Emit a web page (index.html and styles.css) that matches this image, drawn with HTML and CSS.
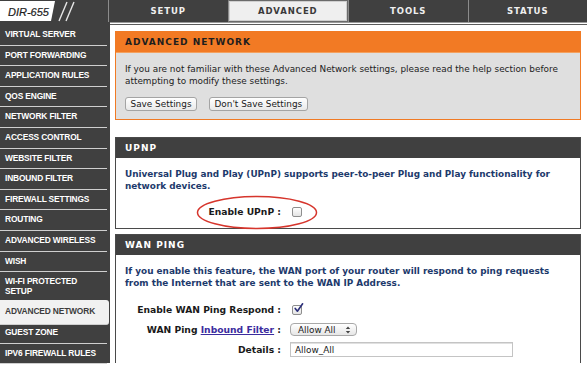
FILE: index.html
```html
<!DOCTYPE html>
<html>
<head>
<meta charset="utf-8">
<link rel="stylesheet" href="styles.css">
</head>
<body>
<div class="top">
  <div class="logo">
    <svg class="logo-bg" width="108" height="22" viewBox="0 0 108 22">
      <polygon points="0,1 55,1 51,21 0,21" fill="#ffffff"/>
      <line x1="67" y1="2" x2="59" y2="21" stroke="#e6e6e6" stroke-width="1.4"/>
      <line x1="74" y1="2" x2="66" y2="21" stroke="#e6e6e6" stroke-width="1.4"/>
    </svg>
    <span class="logo-text">DIR-655</span>
  </div>
  <div class="tabs">
    <div class="tab">SETUP</div>
    <div class="tab active">ADVANCED</div>
    <div class="tab">TOOLS</div>
    <div class="tab">STATUS</div>
  </div>
</div>
<div class="layout">
  <nav class="sidebar">
    <a class="item">VIRTUAL SERVER</a>
    <a class="item">PORT FORWARDING</a>
    <a class="item">APPLICATION RULES</a>
    <a class="item">QOS ENGINE</a>
    <a class="item">NETWORK FILTER</a>
    <a class="item">ACCESS CONTROL</a>
    <a class="item">WEBSITE FILTER</a>
    <a class="item">INBOUND FILTER</a>
    <a class="item">FIREWALL SETTINGS</a>
    <a class="item">ROUTING</a>
    <a class="item">ADVANCED WIRELESS</a>
    <a class="item">WISH</a>
    <a class="item">WI-FI PROTECTED<br>SETUP</a>
    <a class="item selected">ADVANCED NETWORK</a>
    <a class="item">GUEST ZONE</a>
    <a class="item">IPV6 FIREWALL RULES</a>
  </nav>
  <main class="main">
    <div class="rule"></div>
    <section class="box box-orange">
      <h2 class="box-head head-orange">ADVANCED NETWORK</h2>
      <div class="box-body body-grey">
        <p class="desc">If you are not familiar with these Advanced Network settings, please read the help section before attempting to modify these settings.</p>
        <div class="buttons">
          <span class="btn">Save Settings</span>
          <span class="btn">Don't Save Settings</span>
        </div>
      </div>
    </section>

    <section class="box box-dark upnp">
      <h2 class="box-head head-dark">UPNP</h2>
      <div class="box-body">
        <p class="info">Universal Plug and Play (UPnP) supports peer-to-peer Plug and Play functionality for network devices.</p>
        <div class="form">
          <div class="row marked">
            <span class="label">Enable UPnP :</span>
            <span class="field"><span class="check"></span></span>
            <svg class="mark" width="122" height="35" viewBox="0 0 122 35"><ellipse cx="61" cy="17.5" rx="59.5" ry="16" fill="none" stroke="#d6352c" stroke-width="1.5"/></svg>
          </div>
        </div>
      </div>
    </section>

    <section class="box box-dark wan">
      <h2 class="box-head head-dark">WAN PING</h2>
      <div class="box-body">
        <p class="info">If you enable this feature, the WAN port of your router will respond to ping requests from the Internet that are sent to the WAN IP Address.</p>
        <div class="form">
          <div class="row">
            <span class="label">Enable WAN Ping Respond :</span>
            <span class="field"><span class="check on"><svg width="11" height="11" viewBox="0 0 11 11"><path d="M2.2 5.4 L4.4 8.2 L9.6 0.8" fill="none" stroke="#2c2f7a" stroke-width="1.6" stroke-linecap="round" stroke-linejoin="round"/></svg></span></span>
          </div>
          <div class="row">
            <span class="label">WAN Ping <a class="link">Inbound Filter</a> :</span>
            <span class="field"><span class="select">Allow All <svg width="6" height="8" viewBox="0 0 6 8"><path d="M3 0.5 L5.2 3 L0.8 3 Z M3 7.5 L5.2 5 L0.8 5 Z" fill="#444"/></svg></span></span>
          </div>
          <div class="row">
            <span class="label">Details :</span>
            <span class="field"><span class="input">Allow_All</span></span>
          </div>
        </div>
      </div>
    </section>
  </main>
</div>
</body>
</html>
```

FILE: styles.css
```css
* { box-sizing: border-box; }
html, body { margin: 0; padding: 0; }
body {
  width: 587px;
  height: 369px;
  overflow: hidden;
  background: #ffffff;
  font-family: "DejaVu Sans", sans-serif;
  font-size: 8.9px;
  color: #222;
}
h2, p { margin: 0; }

.top {
  display: flex;
  height: 22px;
  background: #404040;
}
.logo {
  width: 108px;
  display: grid;
  align-items: center;
}
.logo-bg, .logo-text { grid-area: 1 / 1; }
.logo-bg { display: block; }
.logo-text {
  font-family: "Liberation Sans", Arial, sans-serif;
  font-style: italic;
  font-size: 11px;
  color: #1c1c1c;
  padding-left: 8px;
  padding-top: 1px;
  -webkit-text-stroke: 0.2px #1c1c1c;
}
.tabs { flex: 1; display: flex; }
.tab {
  flex: 1;
  display: flex;
  align-items: center;
  justify-content: center;
  border-left: 1px solid #8c8c8c;
  font-family: "DejaVu Sans", sans-serif;
  font-weight: bold;
  font-size: 8.5px;
  letter-spacing: 0.9px;
  color: #efefef;
}
.tab.active {
  background: #efefef;
  color: #3a3a3a;
  border: 1px solid #6a6a6a;
  border-left: 1px solid #8c8c8c;
  box-shadow: inset 0 0 0 1px #cfcfcf;
}

.layout {
  display: flex;
  height: 341px;
}
.sidebar {
  width: 110px;
  background: #404040;
  padding-top: 3px;
  display: flex;
  flex-direction: column;
}
.item {
  display: block;
  margin-right: 3px;
  padding: 5px 0 5px 5px;
  line-height: 9.6px;
  border-bottom: 1px solid #cfcfcf;
  font-family: "Liberation Sans", Arial, sans-serif;
  font-weight: bold;
  font-size: 8.4px;
  letter-spacing: -0.15px;
  color: #ffffff;
}
.item.selected {
  background: #f1f1f1;
  color: #3c3c3c;
  margin-right: 1px;
  border-radius: 0 3px 3px 0;
  padding-top: 7px;
  padding-bottom: 7px;
  margin-top: -2px;
  margin-bottom: -2px;
  position: relative;
}

.main {
  flex: 1;
  padding: 0 6px 0 5px;
  overflow: hidden;
}
.rule {
  height: 3px;
  margin: 0 -6px 6px -5px;
  border-top: 1px solid #9a9a9a;
  border-bottom: 1px solid #5a5a5a;
}
.box { border: 1px solid; }
.box-orange { border-color: #f07a24; }
.box-dark { border-color: #4a4a4a; }
.box-head {
  height: 20px;
  display: flex;
  align-items: center;
  padding-left: 9px;
  font-family: "DejaVu Sans", sans-serif;
  font-weight: bold;
  font-size: 9px;
  letter-spacing: 1px;
}
.head-orange { background: #f27a24; color: #1e1e1e; border-bottom: 1px solid #f4a15f; height: 21px; }
.head-dark { background: #404040; color: #ffffff; }
.box-body { padding: 11px 9px 9px; }
.body-grey { background: #dfdfdf; padding: 11px 9px 8px; }
.desc { line-height: 11.7px; color: #222; }
.buttons {
  display: flex;
  gap: 12px;
  margin-top: 10px;
}
.btn {
  height: 14px;
  display: flex;
  align-items: center;
  padding: 0 4.5px;
  border: 1px solid #a4a4a4;
  border-radius: 3px;
  background: linear-gradient(#ffffff, #e9e9e9);
  color: #1a1a1a;
}

.upnp { margin-top: 17px; }
.wan { margin-top: 5px; border-bottom: none; }
.info {
  line-height: 11.7px;
  font-weight: bold;
  color: #1d3a6c;
}
.form {
  display: flex;
  flex-direction: column;
  gap: 5px;
}
.upnp .form { margin-top: 12px; }
.wan .form { margin-top: 13px; }
.row {
  display: grid;
  grid-template-columns: 156px 1fr;
  column-gap: 9px;
  align-items: center;
  min-height: 15px;
}
.upnp .row { min-height: 14px; }
.label {
  text-align: right;
  font-weight: bold;
  font-size: 9.2px;
  color: #1a1a1a;
}
.link { color: #3b2c9e; text-decoration: underline; }
.field { display: flex; align-items: center; }
.check {
  width: 10px;
  height: 10px;
  margin-left: 2px;
  border: 1px solid #8e8e8e;
  border-radius: 2px;
  background: linear-gradient(#ffffff, #e4e4e4);
  position: relative;
}
.check svg { position: absolute; left: 0; top: -3px; }
.select {
  width: 67px;
  height: 13px;
  display: flex;
  align-items: center;
  justify-content: space-between;
  padding: 0 5px 0 7px;
  border: 1px solid #a8a8a8;
  border-radius: 4px;
  background: linear-gradient(#ffffff, #e6e6e6);
  color: #1a1a1a;
}
.input {
  width: 223px;
  height: 15px;
  display: flex;
  align-items: center;
  padding-left: 4px;
  border: 1px solid #c4c4c4;
  box-shadow: inset 0 1px 0 #e0e0e0;
  color: #1a1a1a;
}
.marked { position: relative; }
.mark {
  position: absolute;
  left: 71px;
  top: -10px;
}
```
